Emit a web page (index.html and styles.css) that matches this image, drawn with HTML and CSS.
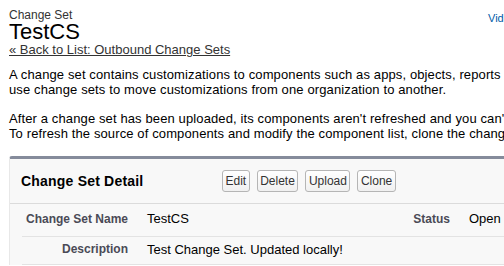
FILE: index.html
```html
<!DOCTYPE html>
<html>
<head>
<meta charset="utf-8">
<link rel="stylesheet" href="styles.css">
</head>
<body>
<div class="page">
  <div class="top">
    <div class="titles">
      <div class="page-type">Change Set</div>
      <h1 class="page-title">TestCS</h1>
      <a class="back" href="#">« Back to List: Outbound Change Sets</a>
    </div>
    <a class="help" href="#">Video Tutorial</a>
  </div>
  <p class="intro">A change set contains customizations to components such as apps, objects, reports or email templates. You can<br>use change sets to move customizations from one organization to another.</p>
  <p class="intro">After a change set has been uploaded, its components aren't refreshed and you can't add or remove components.<br>To refresh the source of components and modify the component list, clone the change set.</p>
  <div class="panel">
    <div class="panel-head">
      <h2 class="panel-title">Change Set Detail</h2>
      <div class="buttons">
        <button class="btn">Edit</button>
        <button class="btn">Delete</button>
        <button class="btn">Upload</button>
        <button class="btn">Clone</button>
      </div>
    </div>
    <div class="detail">
      <div class="row first">
        <div class="label">Change Set Name</div>
        <div class="value">TestCS</div>
        <div class="label label2">Status</div>
        <div class="value value2">Open</div>
      </div>
      <div class="row">
        <div class="label">Description</div>
        <div class="value wide">Test Change Set. Updated locally!</div>
      </div>
    </div>
  </div>
</div>
</body>
</html>
```

FILE: styles.css
```css
html, body {
  margin: 0;
  padding: 0;
  background: #fff;
  overflow: hidden;
}
body {
  font-family: "Liberation Sans", Arial, sans-serif;
  color: #000;
}
.page {
  width: 780px;
  padding: 9px 0 0 9px;
}
.top {
  display: flex;
  align-items: flex-start;
}
.titles {
  width: 479px;
  flex: none;
}
.page-type {
  font-size: 12px;
  color: #333;
  line-height: 12px;
}
.page-title {
  font-size: 22px;
  font-weight: normal;
  margin: 0;
  line-height: 22px;
  color: #000;
}
.back {
  display: block;
  font-size: 13px;
  color: #333;
  text-decoration: underline;
  line-height: 14px;
  width: max-content;
}
.help {
  font-size: 11px;
  color: #015ba7;
  text-decoration: none;
  margin-top: 3px;
  white-space: nowrap;
}
.intro {
  font-size: 13px;
  line-height: 15px;
  letter-spacing: 0.12px;
  margin: 10px 0 0 0;
  width: 760px;
  white-space: nowrap;
  color: #000;
}
.intro + .intro {
  margin-top: 14px;
}
.panel {
  margin-top: 15px;
  border-top: 3px solid #858b9b;
  border-left: 1px solid #e8e8e8;
  background: #f8f8f8;
  width: 600px;
  border-radius: 3px 0 0 0;
}
.panel-head {
  display: flex;
  align-items: center;
  height: 44px;
  border-bottom: 1px solid #dbdbdb;
  padding-left: 11px;
}
.panel-title {
  font-size: 14px;
  font-weight: bold;
  margin: 0;
  width: 201px;
  color: #000;
  letter-spacing: 0.2px;
}
.buttons {
  display: flex;
  gap: 7px;
}
.btn {
  font-family: "Liberation Sans", Arial, sans-serif;
  font-size: 12px;
  color: #333;
  background: linear-gradient(#ffffff, #f0f0f0);
  border: 1px solid #b5b5b5;
  border-radius: 3px;
  height: 22px;
  padding: 0 2.5px;
  margin: 0;
}
.detail {
  padding: 0 0 0 12px;
}
.row {
  display: flex;
  align-items: center;
  height: 25px;
  border-bottom: 1px solid #e3e3e3;
}
.row.first {
  height: 29px;
  padding-bottom: 3px;
}
.row + .row {
  height: 24px;
  padding-bottom: 3px;
}
.label {
  width: 106px;
  text-align: right;
  font-size: 12px;
  font-weight: bold;
  color: #4a4a56;
}
.value {
  font-size: 13px;
  color: #000;
  padding-left: 19px;
  width: 200px;
}
.label2 {
  width: 103px;
}
.value2 {
  width: 60px;
}
.wide {
  width: 400px;
}
```
